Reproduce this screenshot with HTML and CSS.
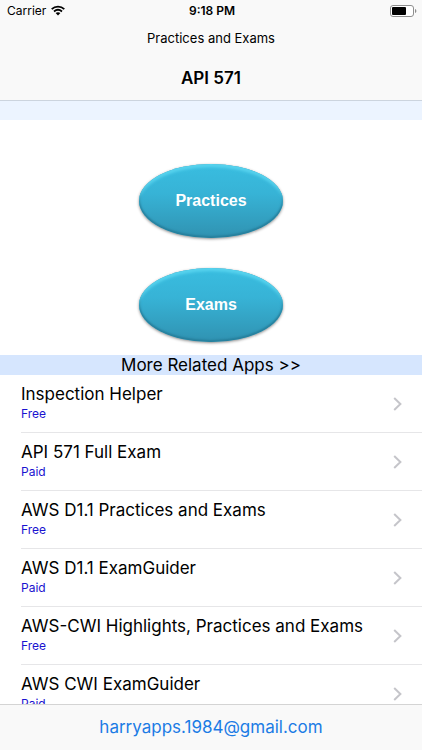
FILE: index.html
```html
<!DOCTYPE html>
<html lang="en">
<head>
<meta charset="utf-8">
<meta name="viewport" content="width=device-width, initial-scale=1">
<title>API 571</title>
<link rel="stylesheet" href="styles.css">
</head>
<body>
<header class="header">
  <div class="status">
    <div class="carrier">
      <span>Carrier</span>
      <svg class="wifi" viewBox="0 0 14 11" aria-hidden="true">
        <path d="M0.7 4.1C4.3 0.7 9.7 0.7 13.3 4.1M3 6.5C5.4 4.4 8.6 4.4 11 6.5" fill="none" stroke="#000" stroke-width="1.8"/>
        <path d="M4.6 8.1C6 7 8 7 9.4 8.1L7 10.6Z"/>
      </svg>
    </div>
    <time class="clock">9:18 PM</time>
    <svg class="battery" viewBox="0 0 27 12" aria-hidden="true">
      <rect x="0.5" y="0.5" width="23" height="11" rx="2.5" fill="#fff" stroke="#8e8e8e"/>
      <rect x="2" y="2" width="14" height="8" rx="1"/>
      <path d="M25 4C26.8 4.5 26.8 7.5 25 8Z" fill="#8e8e8e"/>
    </svg>
  </div>
  <p class="prompt">Practices and Exams</p>
  <h1 class="title">API 571</h1>
</header>
<main class="main">
  <div class="strip"></div>
  <div class="actions">
    <button class="oval" type="button">Practices</button>
    <button class="oval" type="button">Exams</button>
  </div>
  <h2 class="section">More Related Apps &gt;&gt;</h2>
  <ul class="apps">
    <li><a class="app" href="#"><span class="info"><span class="name">Inspection Helper</span><span class="price">Free</span></span><svg class="chevron" viewBox="0 0 9 14" aria-hidden="true"><path d="M1.2 1L7.4 7L1.2 13"/></svg></a></li>
    <li><a class="app" href="#"><span class="info"><span class="name">API 571 Full Exam</span><span class="price">Paid</span></span><svg class="chevron" viewBox="0 0 9 14" aria-hidden="true"><path d="M1.2 1L7.4 7L1.2 13"/></svg></a></li>
    <li><a class="app" href="#"><span class="info"><span class="name">AWS D1.1 Practices and Exams</span><span class="price">Free</span></span><svg class="chevron" viewBox="0 0 9 14" aria-hidden="true"><path d="M1.2 1L7.4 7L1.2 13"/></svg></a></li>
    <li><a class="app" href="#"><span class="info"><span class="name">AWS D1.1 ExamGuider</span><span class="price">Paid</span></span><svg class="chevron" viewBox="0 0 9 14" aria-hidden="true"><path d="M1.2 1L7.4 7L1.2 13"/></svg></a></li>
    <li><a class="app" href="#"><span class="info"><span class="name">AWS-CWI Highlights, Practices and Exams</span><span class="price">Free</span></span><svg class="chevron" viewBox="0 0 9 14" aria-hidden="true"><path d="M1.2 1L7.4 7L1.2 13"/></svg></a></li>
    <li><a class="app" href="#"><span class="info"><span class="name">AWS CWI ExamGuider</span><span class="price">Paid</span></span><svg class="chevron" viewBox="0 0 9 14" aria-hidden="true"><path d="M1.2 1L7.4 7L1.2 13"/></svg></a></li>
  </ul>
</main>
<footer class="footer"><a class="mail" href="mailto:harryapps.1984@gmail.com">harryapps.1984@gmail.com</a></footer>
</body>
</html>
```
FILE: styles.css
```css
* { box-sizing: border-box; }

body {
  margin: 0;
  height: 100vh;
  display: flex;
  flex-direction: column;
  background: #fff;
  color: #000;
  font-family: Inter, "Liberation Sans", sans-serif;
}

h1, h2, p, ul { margin: 0; padding: 0; font-weight: 400; }
ul { list-style: none; }

.header {
  flex: none;
  background: #f9f9f9;
  border-bottom: 1px solid #ccd4de;
  text-align: center;
}

.status {
  display: grid;
  grid-template-columns: 1fr auto 1fr;
  align-items: center;
  height: 21px;
  padding: 0 5px 0 7px;
  font-size: 12px;
}

.carrier { display: flex; align-items: center; gap: 5px; }
.wifi { width: 14px; height: 11px; }
.clock { font-weight: 600; }
.battery { width: 27px; height: 12px; justify-self: end; }

.prompt { font-size: 13px; line-height: 35px; }
.title { font-size: 17px; font-weight: 600; line-height: 44px; }

.main { flex: 1; min-height: 0; overflow: hidden; }
.strip { height: 19px; background: #ecf4ff; }

.actions {
  display: flex;
  flex-direction: column;
  align-items: center;
  gap: 30px;
  padding: 44px 0 13px;
}

.oval {
  width: 144px;
  height: 74px;
  padding: 0;
  border: 0;
  border-radius: 50%;
  background: linear-gradient(#39bde0, #37b3d6 40%, #3092b1);
  box-shadow:
    inset 0 4px 3px -1px #58d4ef,
    inset 0 -1px 2px 1px #267f9c,
    0 1px 3px #888;
  color: #fff;
  font: 700 16px "Liberation Sans", Arial, sans-serif;
}

.section,
.name,
.footer { font-size: 17px; }

.section {
  background: #d6e6fe;
  line-height: 20px;
  text-align: center;
}

.app {
  display: flex;
  align-items: center;
  height: 58px;
  margin-left: 21px;
  padding-right: 20px;
  border-bottom: 1px solid #e6e6e8;
  color: inherit;
  text-decoration: none;
}

.info { flex: 1; display: flex; flex-direction: column; }
.name { line-height: 20px; }
.price { color: #1a12d0; font-size: 12px; line-height: 20px; }

.chevron {
  width: 9px;
  height: 14px;
  fill: none;
  stroke: #c5c5ca;
  stroke-width: 2;
}

.footer {
  flex: none;
  background: #f9f9f9;
  border-top: 1px solid #d4d4d4;
  line-height: 45px;
  text-align: center;
}

.mail { color: #1c7ce5; text-decoration: none; }
```
